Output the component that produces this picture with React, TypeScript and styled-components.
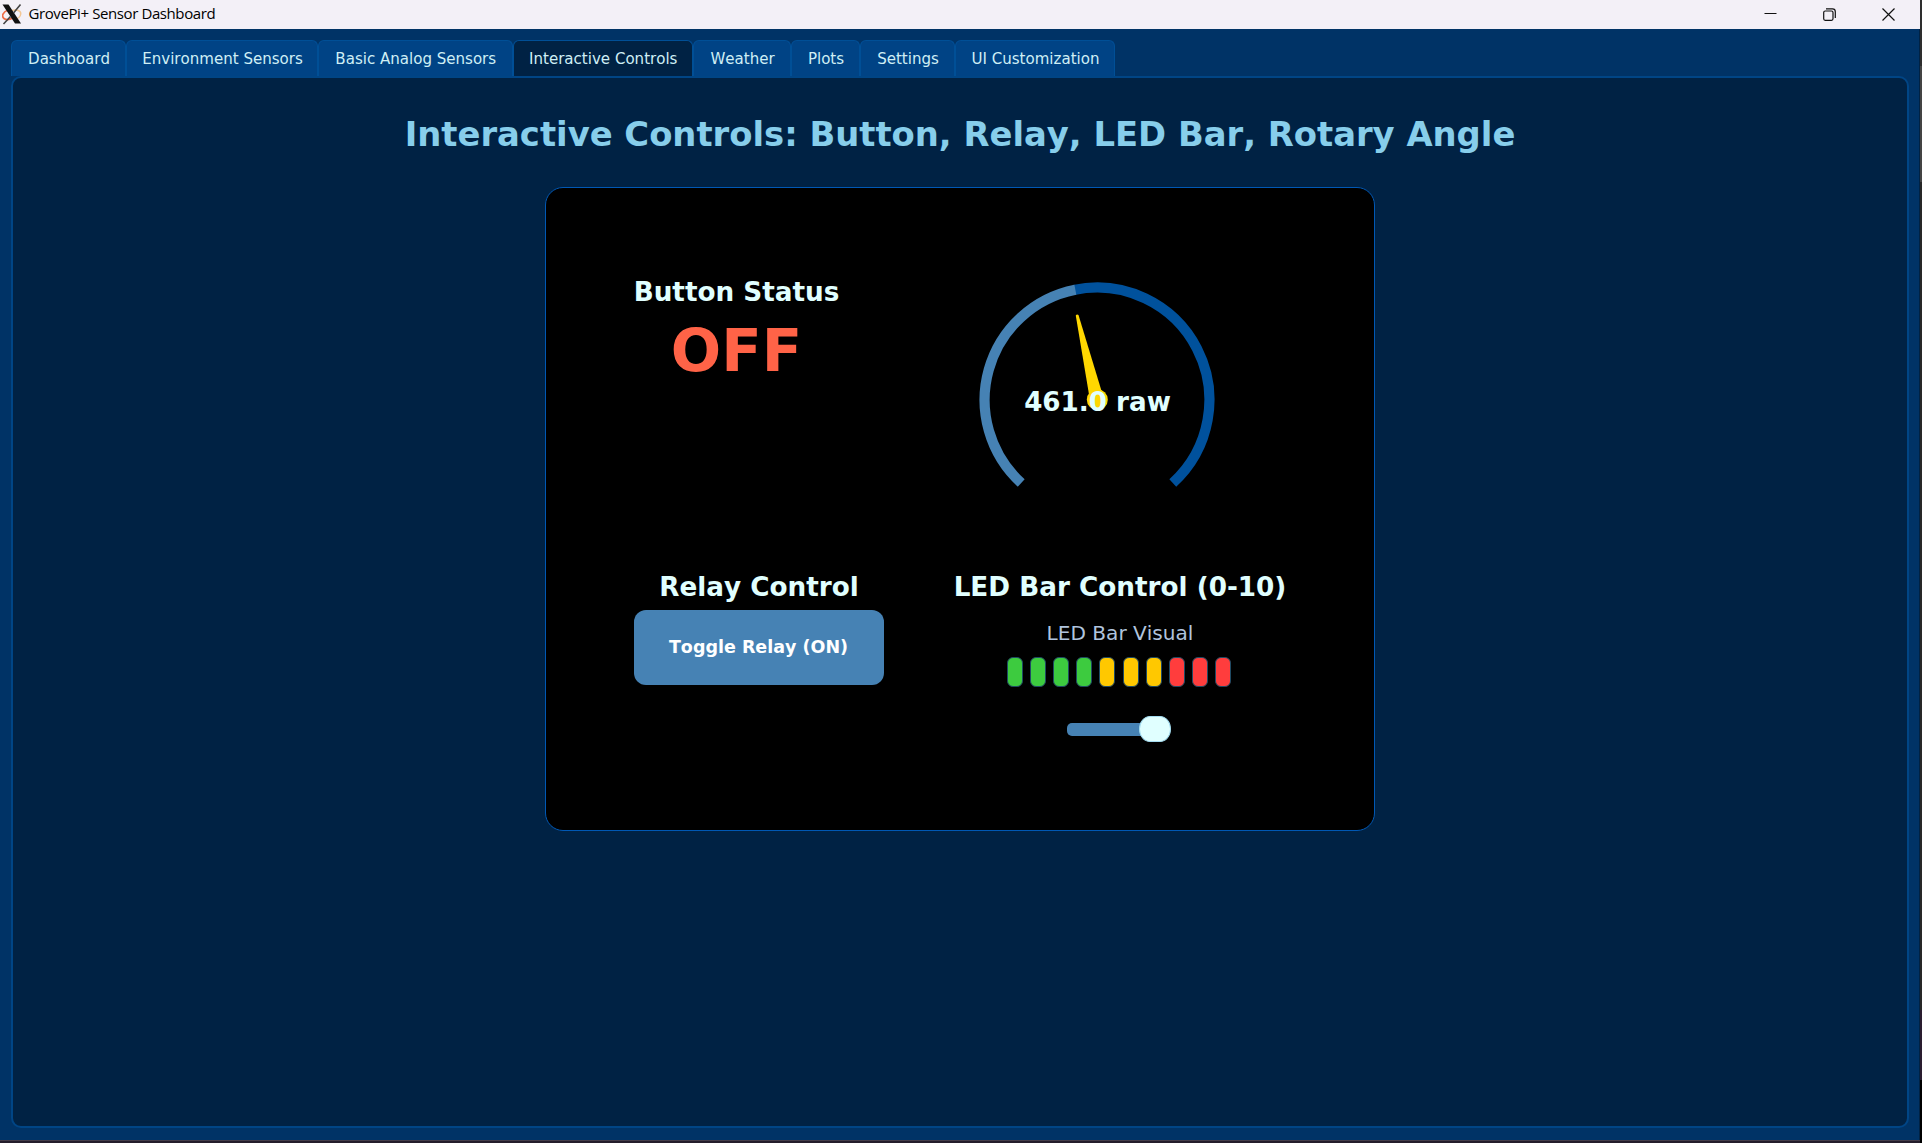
import React from "react";
import styled, { createGlobalStyle } from "styled-components";

const GlobalStyle = createGlobalStyle`
  * { box-sizing: border-box; }
  body { margin: 0; background: #241d2b; overflow: hidden; font-kerning: none; }
`;

const Desktop = styled.div`
  width: 1922px;
  height: 1143px;
  padding: 0 2px 3px 0;
  background:
    linear-gradient(#443c48, #443c48) 0 1140px / 1920px 1px no-repeat,
    linear-gradient(#241d2b, #241d2b) 0 1141px / 1920px 2px no-repeat,
    linear-gradient(#2e2e2e 0 66px, #444 66px 182px, #282828 182px 1010px, #2a1d30 1010px 1080px, #000 1080px);
  font-family: "DejaVu Sans", sans-serif;
`;

const Window = styled.div`
  display: flex;
  flex-direction: column;
  width: 1920px;
  height: 1140px;
  background: #003366;
  box-shadow: inset -1px 0 #002244;
`;

const TitleBar = styled.header`
  display: flex;
  align-items: center;
  width: 1920px;
  height: 29px;
  flex: none;
  padding: 0 25px 0 2px;
  background: #f3f0f7;
`;

const WindowTitle = styled.span`
  flex: 1;
  height: 29px;
  margin-left: 6.5px;
  font: 15px/27px "Open Sans", "Noto Sans", sans-serif;
  letter-spacing: -0.4px;
  color: #000;
`;

const WindowButtons = styled.div`
  display: flex;
  gap: 46px;
  height: 29px;
  align-items: center;
`;

const Body = styled.main`
  flex: 1;
  display: flex;
  flex-direction: column;
  padding: 11px 11px 12px 11px;
`;

const TabBar = styled.nav`
  display: flex;
  height: 36px;
  flex: none;
`;

const Tab = styled.div<{ $width: number; $active?: boolean }>`
  width: ${(p) => p.$width}px;
  height: 36px;
  padding-left: 1px;
  border: 1px solid #004f96;
  border-bottom: 0;
  border-radius: 6px 6px 0 0;
  background: ${(p) => (p.$active ? "#002244" : "#004385")};
  color: #cfeff5;
  font-size: 15.05px;
  line-height: 36px;
  text-align: center;
  white-space: nowrap;
`;

const Pane = styled.section`
  flex: 1;
  display: flex;
  flex-direction: column;
  align-items: center;
  border: 2px solid #004585;
  border-radius: 10px;
  background: #002244;
`;

const Heading = styled.h1`
  margin: 37px 0 32px;
  font-size: 33.8px;
  line-height: 40px;
  color: #87ceeb;
  white-space: nowrap;
`;

const Card = styled.div`
  width: 830px;
  height: 644px;
  border: 1px solid #0058b4;
  border-radius: 18px;
  background: #000;
  padding: 88px 0 0 88px;
`;

const CardRow = styled.div<{ $height: number }>`
  display: flex;
  align-items: flex-start;
  height: ${(p) => p.$height}px;
`;

const Cell = styled.div<{ $width: number; $left?: number }>`
  display: flex;
  flex-direction: column;
  align-items: center;
  width: ${(p) => p.$width}px;
  margin-left: ${(p) => p.$left ?? 0}px;
`;

const Label = styled.h2`
  margin: 0;
  font-size: 26.25px;
  line-height: 32px;
  color: #e0ffff;
  white-space: nowrap;
`;

const Status = styled.div`
  margin-top: 8px;
  font-size: 59.3px;
  font-weight: bold;
  line-height: 70px;
  color: #ff6347;
`;

const GaugeBox = styled.div`
  position: relative;
  width: 240px;
  height: 240px;
  margin-top: 4px;
  svg { display: block; }
`;

const GaugeValue = styled.span`
  position: absolute;
  inset: 0;
  top: 2px;
  left: 1px;
  font-size: 26.2px;
  font-weight: bold;
  line-height: 240px;
  text-align: center;
  color: #e0ffff;
`;

const RelayButton = styled.button`
  width: 250px;
  height: 75px;
  margin-top: 7px;
  padding: 0 1px 1px 0;
  border: 0;
  border-radius: 12px;
  background: #4682b4;
  color: #fff;
  font: bold 17.5px "DejaVu Sans", sans-serif;
  font-kerning: none;
`;

const SubLabel = styled.div`
  margin-top: 18px;
  font-size: 20.1px;
  line-height: 24px;
  color: #b0c4de;
`;

const LedRow = styled.div`
  display: flex;
  gap: 7.1px;
  margin: 12px 2px 0 0;
`;

const Led = styled.i<{ $color: string }>`
  width: 16px;
  height: 30px;
  border: 1px solid #1f4a63;
  border-radius: 6px;
  background: ${(p) => p.$color};
`;

const Slider = styled.div`
  display: flex;
  align-items: center;
  width: 104px;
  height: 26px;
  margin: 29px 2px 0 0;
`;

const Track = styled.div`
  flex: 1;
  height: 13px;
  margin-right: -10px;
  border-radius: 5px;
  background: #4682b4;
`;

const Handle = styled.div`
  width: 32px;
  height: 26px;
  border: 1px solid #a4dcf0;
  border-radius: 11px / 13px;
  background: #e0ffff;
`;

const tabs = [
  { name: "Dashboard", width: 115 },
  { name: "Environment Sensors", width: 192 },
  { name: "Basic Analog Sensors", width: 194.5 },
  { name: "Interactive Controls", width: 180.5 },
  { name: "Weather", width: 98 },
  { name: "Plots", width: 69 },
  { name: "Settings", width: 95 },
  { name: "UI Customization", width: 160 },
];

const leds = [
  ...Array(4).fill("#3dcb3f"),
  ...Array(3).fill("#ffc800"),
  ...Array(3).fill("#ff3d3d"),
];

/* Point on the dial, measured in degrees clockwise from the top. */
const at = (deg: number, r: number) => {
  const a = (deg * Math.PI) / 180;
  return `${(120 + r * Math.sin(a)).toFixed(2)} ${(120 - r * Math.cos(a)).toFixed(2)}`;
};
const arc = (from: number, to: number, r = 112.4) =>
  `M${at(from, r)} A${r} ${r} 0 ${to - from > 180 ? 1 : 0} 1 ${at(to, r)}`;

function Gauge() {
  return (
    <GaugeBox>
      <svg width="240" height="240" viewBox="0 0 240 240" fill="none">
        <path d={arc(-12, 137.6)} stroke="#00519c" strokeWidth="10.2" />
        <path d={arc(-137.6, -11.1)} stroke="#4682b4" strokeWidth="10.2" />
        <g fill="#ffd700">
          <circle cx="120.300" cy="119.700" r="10.5" />
          <path d="M113 120 L118.6 33 Q120 31.5 121.4 33 L127 120Z" transform="rotate(-13.2 120 120)" />
        </g>
      </svg>
      <GaugeValue>461.0 raw</GaugeValue>
    </GaugeBox>
  );
}

function XLogo() {
  return (
    <svg width="20" height="22" viewBox="0 0 20 22" fill="none">
      <path d="M6 6C1 8 -1 12 2 14.5C4 16 8 15.500 11 14" stroke="#ee6a45" strokeWidth="1.700" />
      <path d="M10 6.500C15 5 19 7 18.700 10C18.400 13 15 15 12 15.500" stroke="#f3c795" strokeWidth="1.500" />
      <path d="M0.500 0.500H6.500L19 19.500H13Z" fill="#111" />
      <path d="M18.500 0.500L11.500 9M8.500 12.500L1.500 20" stroke="#444" strokeWidth="1.600" />
    </svg>
  );
}

export default function App() {
  return (
    <Desktop>
      <GlobalStyle />
      <Window>
        <TitleBar>
          <XLogo />
          <WindowTitle>GrovePi+ Sensor Dashboard</WindowTitle>
          <WindowButtons>
            <svg width="13" height="13" viewBox="0 0 13 13" stroke="#111" fill="none">
              <path d="M0.500 5.500H12.500" />
            </svg>
            <svg width="13" height="13" viewBox="0 0 13 13" stroke="#111" strokeWidth="1.200" fill="none">
              <rect x="0.700" y="3" width="9.300" height="9.300" rx="1.500" />
              <path d="M3 0.900H9.500Q12.300 0.900 12.300 3.700V10" />
            </svg>
            <svg width="13" height="13" viewBox="0 0 13 13" stroke="#111" strokeWidth="1.200">
              <path d="M0.500 0.500L12.500 12.500M12.500 0.500L0.500 12.500" />
            </svg>
          </WindowButtons>
        </TitleBar>
        <Body>
          <TabBar>
            {tabs.map((t) => (
              <Tab key={t.name} $width={t.width} $active={t.name === "Interactive Controls"}>
                {t.name}
              </Tab>
            ))}
          </TabBar>
          <Pane>
            <Heading>Interactive Controls: Button, Relay, LED Bar, Rotary Angle</Heading>
            <Card>
              <CardRow $height={295}>
                <Cell $width={205}>
                  <Label>Button Status</Label>
                  <Status>OFF</Status>
                </Cell>
                <Cell $width={240} $left={138}>
                  <Gauge />
                </Cell>
              </CardRow>
              <CardRow $height={180}>
                <Cell $width={250}>
                  <Label>Relay Control</Label>
                  <RelayButton>Toggle Relay (ON)</RelayButton>
                </Cell>
                <Cell $width={340} $left={66}>
                  <Label>LED Bar Control (0-10)</Label>
                  <SubLabel>LED Bar Visual</SubLabel>
                  <LedRow>
                    {leds.map((c, i) => (
                      <Led key={i} $color={c} />
                    ))}
                  </LedRow>
                  <Slider>
                    <Track />
                    <Handle />
                  </Slider>
                </Cell>
              </CardRow>
            </Card>
          </Pane>
        </Body>
      </Window>
    </Desktop>
  );
}
